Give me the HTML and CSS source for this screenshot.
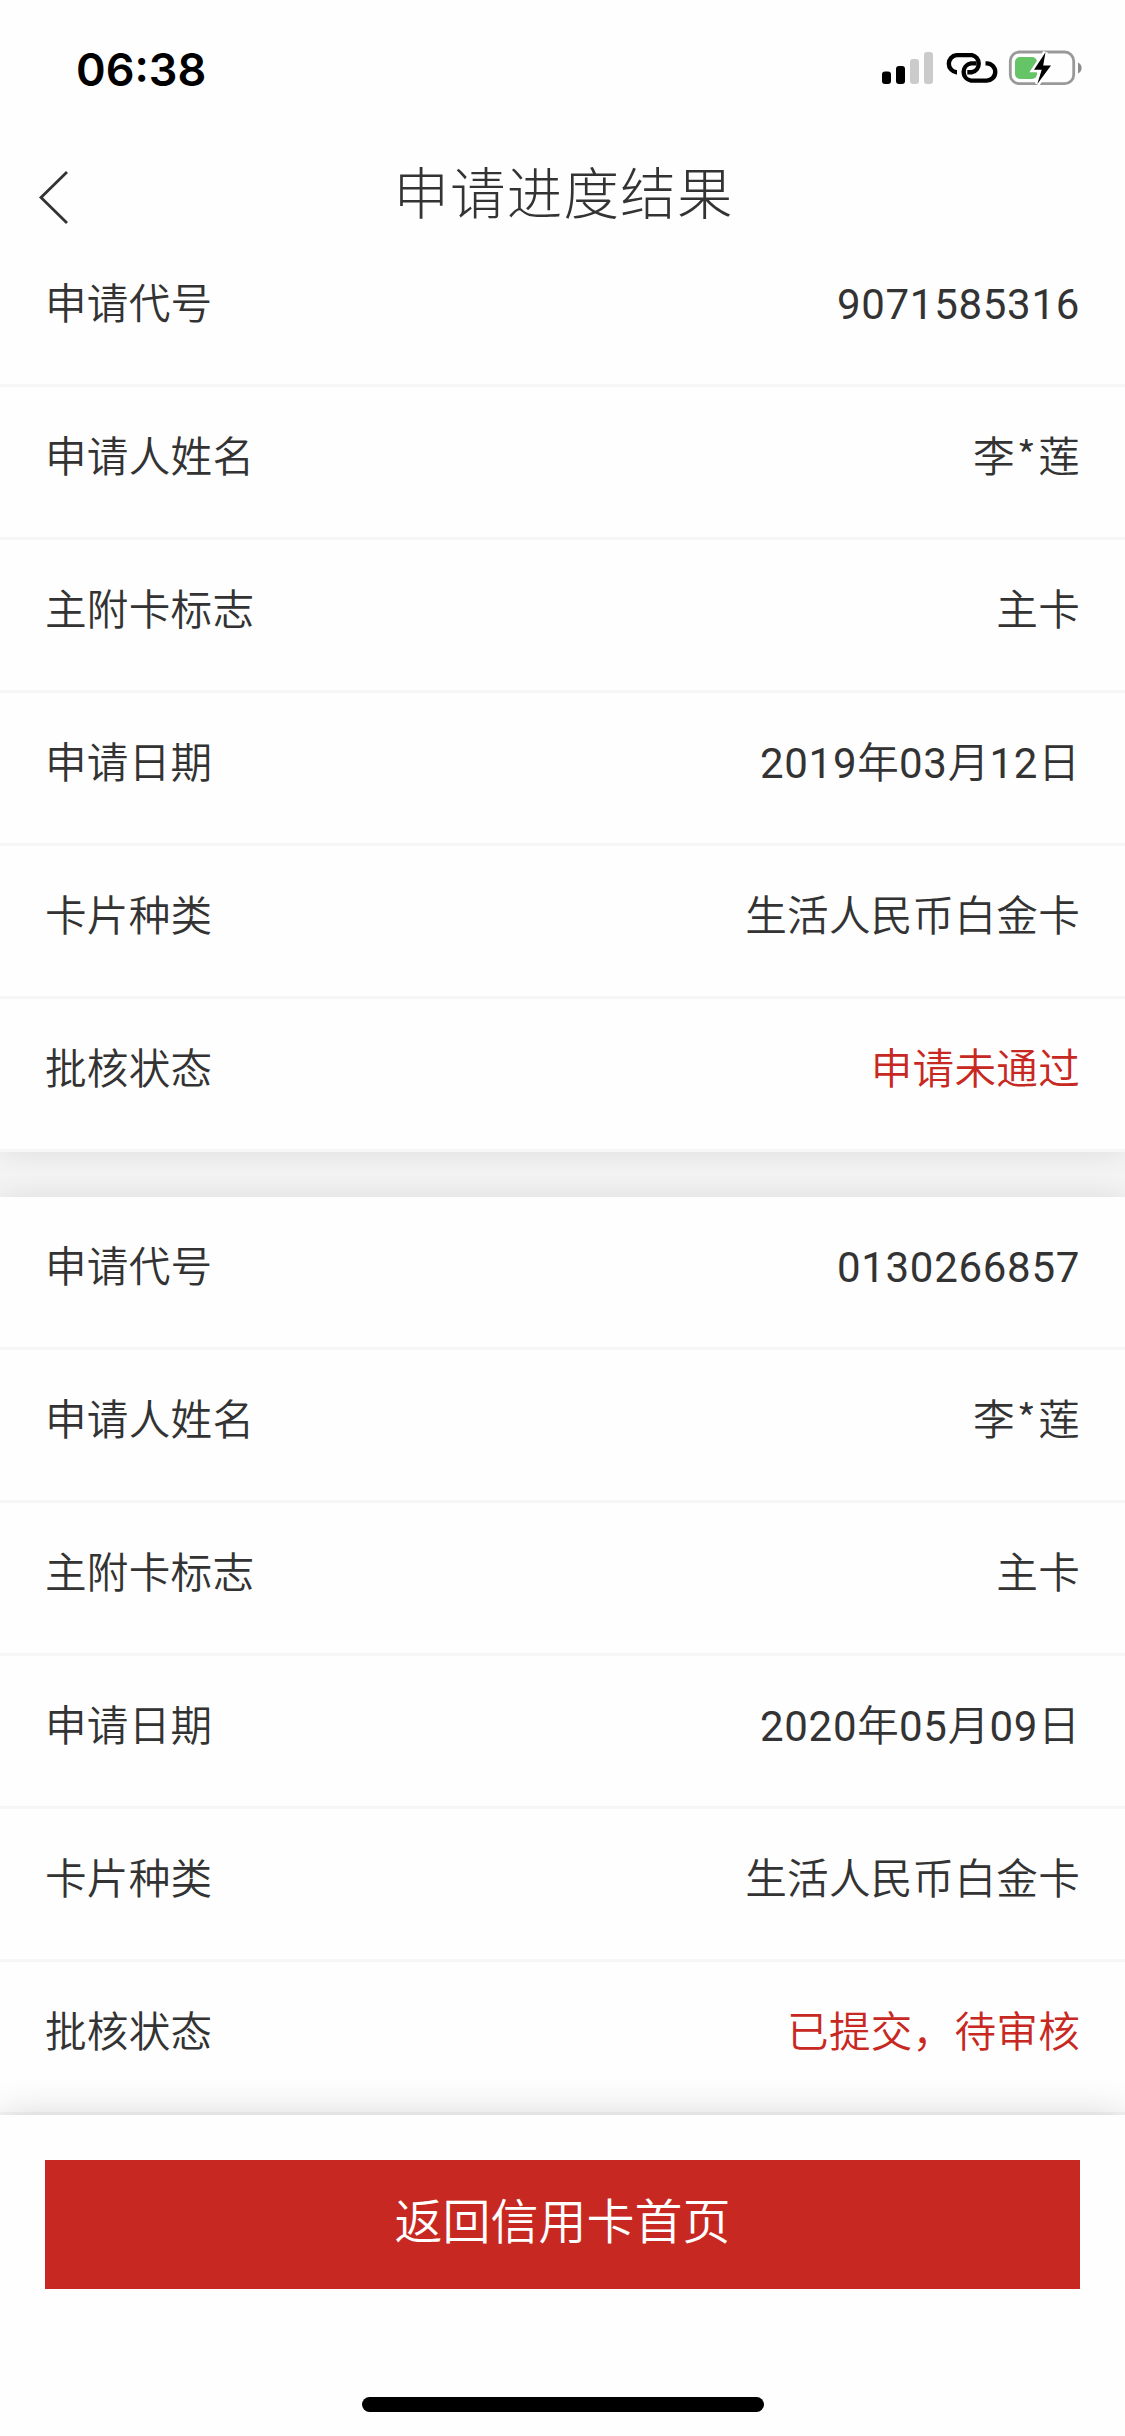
FILE: index.html
```html
<!DOCTYPE html>
<html lang="zh-CN">
<head>
<meta charset="utf-8">
<title>申请进度结果</title>
<link rel="stylesheet" href="styles.css">
</head>
<body>
<header class="header">
  <div class="status">
    <span class="time">06:38</span>
    <svg class="status-icons" width="204" height="40" viewBox="880 50 204 40">
      <rect x="882" y="72.500" width="9" height="12.500" rx="3"/>
      <rect x="896" y="67" width="9" height="18" rx="3"/>
      <rect x="910" y="60" width="9" height="25" rx="3" fill="#cbcbcb"/>
      <rect x="924" y="53" width="9" height="32" rx="3" fill="#cbcbcb"/>
      <g fill="none" stroke="#000" stroke-width="4.400">
        <path d="M957 73.200h-.5a8.600 8.600 0 0 1 0-17.100h15.500a8.800 8.800 0 0 1 0 17.100h-4.700"/>
        <path d="M976.500 64.400h-5.500a8.700 8.700 0 0 0 0 17.200h15.500a8.600 8.600 0 0 0 .3-17.200h-1.300"/>
      </g>
      <rect x="1010.300" y="53" width="63.400" height="31.700" rx="9" fill="none" stroke="#999" stroke-width="2.800"/>
      <path d="M1078 63.500a6 6 0 0 1 0 11z" fill="#8c8c8c"/>
      <rect x="1015" y="58" width="22" height="22" rx="5" fill="#65c466"/>
      <path d="M1045.500 53.300 1034 70.700h7.700l-4.400 14.300 13.700-18.500h-7.800z" stroke="#fff" stroke-width="5"/>
      <path d="M1045.500 53.300 1034 70.700h7.700l-4.400 14.300 13.700-18.500h-7.800z"/>
    </svg>
  </div>
  <div class="nav">
    <svg class="back" width="32" height="56" viewBox="0 0 32 56"><path d="M29 3 3 28.500 29 54" fill="none" stroke="#333" stroke-width="2.800"/></svg>
    <h1 class="title">申请进度结果</h1>
  </div>
</header>
<main class="list">
  <section class="card">
    <div class="row"><span>申请代号</span><span class="value"><span class="num">9071585316</span></span></div>
    <div class="row"><span>申请人姓名</span><span class="value">李<span class="mask">*</span>莲</span></div>
    <div class="row"><span>主附卡标志</span><span class="value">主卡</span></div>
    <div class="row"><span>申请日期</span><span class="value"><span class="num">2019</span>年<span class="num">03</span>月<span class="num">12</span>日</span></div>
    <div class="row"><span>卡片种类</span><span class="value">生活人民币白金卡</span></div>
    <div class="row"><span>批核状态</span><span class="value state">申请未通过</span></div>
  </section>
  <section class="card">
    <div class="row"><span>申请代号</span><span class="value"><span class="num">0130266857</span></span></div>
    <div class="row"><span>申请人姓名</span><span class="value">李<span class="mask">*</span>莲</span></div>
    <div class="row"><span>主附卡标志</span><span class="value">主卡</span></div>
    <div class="row"><span>申请日期</span><span class="value"><span class="num">2020</span>年<span class="num">05</span>月<span class="num">09</span>日</span></div>
    <div class="row"><span>卡片种类</span><span class="value">生活人民币白金卡</span></div>
    <div class="row"><span>批核状态</span><span class="value state">已提交，待审核</span></div>
  </section>
</main>
<footer class="footer">
  <button class="home" type="button">返回信用卡首页</button>
  <div class="indicator"></div>
</footer>
</body>
</html>
```
FILE: styles.css
```css
* { box-sizing: border-box; }
body {
  margin: 0;
  display: flex;
  flex-direction: column;
  height: 2436px;
  background: #fefefe;
  color: #333;
  font-family: "Noto Sans CJK SC", sans-serif;
  font-size: 41.600px;
  font-weight: 350;
  letter-spacing: .25px;
}
.header { height: 234px; background: #fefefe; }
.status {
  display: flex;
  justify-content: space-between;
  align-items: center;
  height: 138px;
  padding: 0 41px 0 76px;
}
.time {
  font: 600 45px/1 Inter, sans-serif;
  letter-spacing: 0;
  color: #000;
}
.nav {
  display: grid;
  grid-template-columns: 120px 1fr 120px;
  align-items: center;
  height: 104px;
}
.back { margin: 13px 0 0 38px; }
.title {
  margin: 0;
  padding-left: 2px;
  text-align: center;
  font-size: 55.500px;
  font-weight: 300;
  letter-spacing: 1.200px;
  line-height: 104px;
}
.list { background: #f4f4f4; }
.card {
  background: #fefefe;
  box-shadow: 0 0 30px rgba(0, 0, 0, .1);
  clip-path: inset(0 0 -24px 0);
}
.card + .card {
  margin-top: 45px;
  clip-path: inset(-21px 0 0 0);
}
.row {
  display: flex;
  justify-content: space-between;
  height: 153px;
  padding: 0 45px;
  border-bottom: 3px solid #f6f6f6;
  line-height: 134px;
}
.num {
  font-family: Roboto, sans-serif;
  font-size: 42px;
  font-weight: 400;
  letter-spacing: .7px;
}
.mask { padding: 0 2px; }
.state { color: #c82822; }
.footer {
  position: relative;
  display: flex;
  flex-direction: column;
  align-items: center;
  height: 321px;
  padding: 45px 45px 24px;
  background: #fefefe;
  box-shadow: 0 0 36px rgba(0, 0, 0, .16);
}
.home {
  width: 100%;
  height: 129px;
  border: 0;
  padding: 0 0 11px;
  background: #c82822;
  color: #fff;
  font: 350 48px/1.200 "Noto Sans CJK SC", sans-serif;
}
.indicator {
  width: 402px;
  height: 15px;
  margin-top: auto;
  border-radius: 8px;
  background: #000;
}
```
